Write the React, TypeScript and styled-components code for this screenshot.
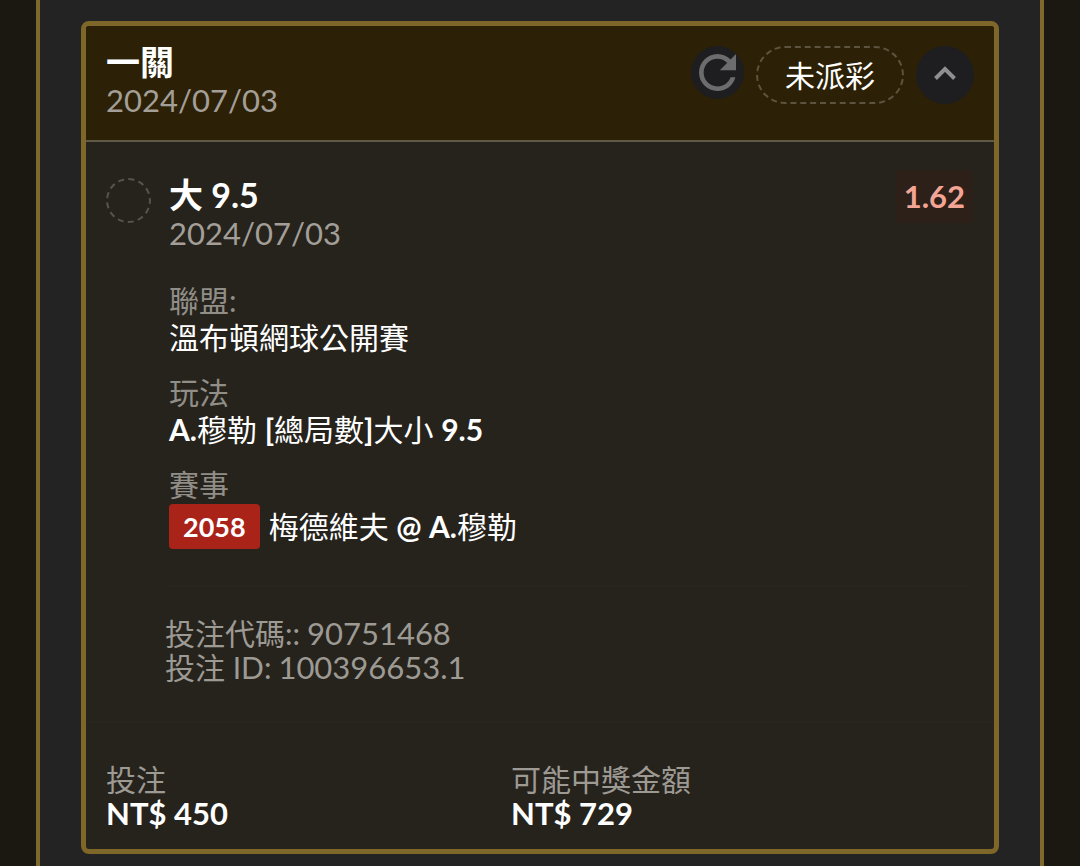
import React, { useState } from "react";
import styled, { createGlobalStyle } from "styled-components";

const GlobalStyle = createGlobalStyle`
  *, *::before, *::after { box-sizing: border-box; }
  body {
    margin: 0;
    background: #1b1812;
    color: #fff;
    font-family: Lato, "Noto Sans CJK TC", sans-serif;
    font-size: 30px;
    line-height: 37px;
  }
`;

const Page = styled.main`
  min-height: 100vh;
  display: flex;
  padding: 0 36px;
`;

const Panel = styled.section`
  flex: 1;
  min-width: 0;
  padding: 21px 41px 11px;
  background: #232323;
  border: solid #7f682b;
  border-width: 0 4px;
`;

const Card = styled.article`
  border: 5px solid #7f6629;
  border-radius: 8px;
  background: #26231d;
  overflow: hidden;
`;

const Header = styled.header`
  display: flex;
  justify-content: space-between;
  align-items: flex-start;
  padding: 17px 20px 21px;
  background: #2c2106;
  border-bottom: 2px solid #5f5948;
`;

const Title = styled.h2`
  margin: 0;
  font-size: 34px;
  line-height: 38px;
  font-weight: 700;
`;

const DateText = styled.time`
  display: block;
  font-size: 31px;
  line-height: 38px;
  color: #a39f98;
`;

const Actions = styled.div`
  display: flex;
  gap: 12px;
  padding-top: 3px;
`;

const RoundButton = styled.button<{ $size: number; $color: string }>`
  display: flex;
  align-items: center;
  justify-content: center;
  width: ${(p) => p.$size}px;
  height: ${(p) => p.$size}px;
  padding: 0;
  border: 0;
  border-radius: 50%;
  background: #1e1e20;
  color: ${(p) => p.$color};
  cursor: pointer;
`;

const Status = styled.span`
  display: flex;
  align-items: center;
  height: 58px;
  padding: 0 27px;
  border: 2px dashed #5c543e;
  border-radius: 29px;
`;

const Selection = styled.section`
  display: flex;
  align-items: flex-start;
  gap: 18px;
  padding: 34px 26px 37px 20px;
`;

const ResultMark = styled.span`
  flex: none;
  width: 45px;
  height: 45px;
  margin-top: 2px;
  border: 2px dashed #57544d;
  border-radius: 50%;
`;

const SelectionBody = styled.div`
  flex: 1;
  min-width: 0;
`;

const SelectionTop = styled.div`
  display: flex;
  justify-content: space-between;
  align-items: flex-start;
`;

const Odds = styled.strong`
  margin: -6px -5px 0 0;
  padding: 8px;
  background: #2d2019;
  color: #f2a595;
  font-size: 31px;
`;

const Details = styled.dl`
  display: flex;
  flex-direction: column;
  gap: 18px;
  margin: 0;
  padding: 30px 0 36px;
  border-bottom: 2px solid #292620;
`;

const Term = styled.dt`
  color: #918e88;
`;

const Value = styled.dd`
  display: flex;
  align-items: center;
  gap: 9px;
  margin: 0;
`;

const MatchValue = styled(Value)`
  padding-top: 1px;
`;

const MatchNumber = styled.span`
  padding: 4px 14px;
  border-radius: 4px;
  background: #a92318;
  font-size: 27px;
  font-weight: 700;
`;

const References = styled.dl`
  margin: 0 0 0 -4px;
  padding: 29px 0 0;
  color: #9d9a94;
  line-height: 34px;
`;

const Reference = styled.div`
  display: flex;
  gap: 7px;
`;

const ReferenceValue = styled.dd`
  margin: 0;
  font-size: 31px;
`;

const Totals = styled.dl`
  display: grid;
  grid-template-columns: 7fr 8fr;
  margin: 0;
  padding: 39px 20px 19px;
  border-top: 2px solid #292620;
  line-height: 34px;
`;

const TotalTerm = styled.dt`
  color: #9d9a94;
`;

const Amount = styled.dd`
  margin: 0;
  font-size: 31px;
  font-weight: 700;
`;

function RefreshIcon() {
  return (
    <svg width="37" height="37" viewBox="4 4 16 16" aria-hidden="true">
      <path
        d="M17.65 6.35C16.2 4.9 14.21 4 12 4c-4.42 0-7.99 3.58-7.99 8s3.57 8 7.99 8c3.73 0 6.84-2.55 7.73-6h-2.08c-.82 2.33-3.04 4-5.65 4-3.31 0-6-2.69-6-6s2.69-6 6-6c1.66 0 3.14.69 4.22 1.78L13 11h7V4l-2.35 2.35z"
        fill="currentColor"
      />
    </svg>
  );
}

function ChevronIcon({ open }: { open: boolean }) {
  return (
    <svg width="24" height="20" viewBox="0 0 24 20" fill="none" aria-hidden="true">
      <path
        d={open ? "M2.5 13.5 12 4 21.5 13.5" : "M2.5 5.5 12 15 21.5 5.5"}
        stroke="currentColor"
        strokeWidth="4"
      />
    </svg>
  );
}

export default function App() {
  const [open, setOpen] = useState(true);
  return (
    <>
      <GlobalStyle />
      <Page lang="zh-TW">
        <Panel>
          <Card>
            <Header>
              <div>
                <Title>一關</Title>
                <DateText dateTime="2024-07-03">2024/07/03</DateText>
              </div>
              <Actions>
                <RoundButton $size={53} $color="#6c6c6d" aria-label="重新整理">
                  <RefreshIcon />
                </RoundButton>
                <Status>未派彩</Status>
                <RoundButton
                  $size={58}
                  $color="#8f8f8f"
                  aria-label="展開"
                  aria-expanded={open}
                  onClick={() => setOpen(!open)}
                >
                  <ChevronIcon open={open} />
                </RoundButton>
              </Actions>
            </Header>
            {open && (
              <Selection>
                <ResultMark />
                <SelectionBody>
                  <SelectionTop>
                    <div>
                      <Title as="h3">大 9.5</Title>
                      <DateText dateTime="2024-07-03">2024/07/03</DateText>
                    </div>
                    <Odds>1.62</Odds>
                  </SelectionTop>
                  <Details>
                    <div>
                      <Term>聯盟:</Term>
                      <Value>溫布頓網球公開賽</Value>
                    </div>
                    <div>
                      <Term>玩法</Term>
                      <Value>
                        <span>
                          <b>A.</b>穆勒 <b>[</b>總局數<b>]</b>大小 <b>9.5</b>
                        </span>
                      </Value>
                    </div>
                    <div>
                      <Term>賽事</Term>
                      <MatchValue>
                        <MatchNumber>2058</MatchNumber>
                        <span>
                          梅德維夫 <b>@ A.</b>穆勒
                        </span>
                      </MatchValue>
                    </div>
                  </Details>
                  <References>
                    <Reference>
                      <dt>投注代碼::</dt>
                      <ReferenceValue>90751468</ReferenceValue>
                    </Reference>
                    <Reference>
                      <dt>投注 ID:</dt>
                      <ReferenceValue>100396653.1</ReferenceValue>
                    </Reference>
                  </References>
                </SelectionBody>
              </Selection>
            )}
            <Totals>
              <div>
                <TotalTerm>投注</TotalTerm>
                <Amount>NT$ 450</Amount>
              </div>
              <div>
                <TotalTerm>可能中獎金額</TotalTerm>
                <Amount>NT$ 729</Amount>
              </div>
            </Totals>
          </Card>
        </Panel>
      </Page>
    </>
  );
}
